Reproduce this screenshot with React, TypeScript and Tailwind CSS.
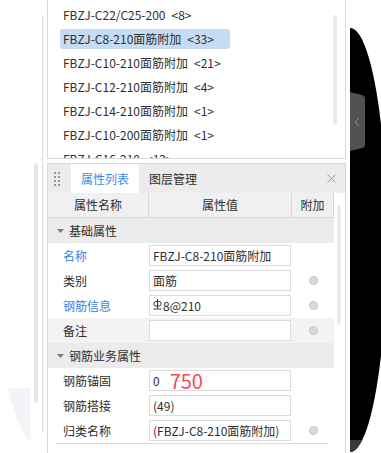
import React from "react";

const items: [string, string][] = [
  ["FBZJ-C22/C25-200", "<8>"],
  ["FBZJ-C8-210面筋附加", "<33>"],
  ["FBZJ-C10-210面筋附加", "<21>"],
  ["FBZJ-C12-210面筋附加", "<4>"],
  ["FBZJ-C14-210面筋附加", "<1>"],
  ["FBZJ-C10-200面筋附加", "<1>"],
  ["FBZJ-C16-210", "<12>"],
];

const Rebar = () => (
  <svg width="9" height="11" viewBox="0 0 9 11" className="inline-block mr-[1px] -mt-[3px] align-middle">
    <rect x="1" y="2.5" width="7" height="4.5" rx="1.8" fill="none" stroke="#333" strokeWidth="1" />
    <line x1="4.5" y1="0" x2="4.5" y2="9.5" stroke="#333" strokeWidth="1" />
    <line x1="0.5" y1="10" x2="8.5" y2="10" stroke="#333" strokeWidth="1" />
  </svg>
);

const Radio = () => (
  <div className="w-[9px] h-[9px] rounded-full bg-[#dadada] border border-[#c2c2c2]" />
);

const Tri = () => (
  <svg width="7" height="4" viewBox="0 0 7 4" className="shrink-0">
    <polygon points="0,0 7,0 3.5,4" fill="#7a7a7a" />
  </svg>
);

const Section = ({ title }: { title: string }) => (
  <div className="h-[25px] bg-[#ebebeb] flex items-center pl-[9px]">
    <Tri />
    <span className="ml-[5px]">{title}</span>
  </div>
);

const Row = ({
  label,
  blue,
  value,
  radio,
  gray,
}: {
  label: string;
  blue?: boolean;
  value: React.ReactNode;
  radio?: boolean;
  gray?: boolean;
}) => (
  <div className={`h-[25px] flex items-center ${gray ? "bg-[#f3f3f3]" : ""}`}>
    <div className={`w-[101px] pl-[15px] ${blue ? "text-[#3a7fe0]" : ""}`}>{label}</div>
    <div className="w-[143px]">
      <div className="w-[142px] h-[21px] border border-[#dcdcdc] bg-white px-[3px] flex items-center whitespace-nowrap">
        {value}
      </div>
    </div>
    <div className="w-[42px] flex justify-center">{radio ? <Radio /> : null}</div>
  </div>
);

export default function App() {
  return (
    <div className="w-[381px] h-[453px] bg-white flex overflow-hidden text-[12px] text-[#2e2e2e] font-['Noto_Sans_CJK_SC',sans-serif]">
      {/* left gutter */}
      <div className="relative w-[47px] shrink-0 flex">
        <svg width="22" height="55" viewBox="0 0 22 55" className="absolute left-[8px] top-[388px]">
          <path d="M0,0 H22 V55 Q6,32 0,0 Z" fill="#f3f4f7" />
        </svg>
        <div className="ml-[34px] mt-[163px] w-[4px] h-[240px] rounded-full bg-[#e8e8e8]" />
        <div className="ml-[4px] mt-[15px] w-px h-[418px] bg-[#dcdcdc]" />
      </div>

      {/* main */}
      <div className="w-[299px] shrink-0 flex flex-col">
        {/* list */}
        <div className="h-[159px] border-x border-b border-[#d9d9d9] flex overflow-hidden">
          <div className="flex-1 pl-[12px] pt-[5px] flex flex-col gap-[4px]">
            {items.map(([t, c], i) => (
              <div
                key={i}
                className={`h-[20px] shrink-0 w-[170px] px-[3px] rounded-[3px] leading-[20px] whitespace-nowrap ${
                  i === 1 ? "bg-[#c6dcf4]" : ""
                }`}
              >
                {t}
                <span className="ml-[6px]">{c}</span>
              </div>
            ))}
          </div>
          <div className="w-[4px] h-[110px] mt-[15px] mr-[8px] rounded-full bg-[#ebebeb]" />
        </div>

        {/* property panel */}
        <div className="mt-[4px] flex-1 border-x border-t border-[#d9d9d9] flex flex-col">
          <div className="h-[29px] bg-[#ececec] flex items-stretch">
            <div className="w-[23px] pl-[6px] flex items-center">
              <div className="grid grid-cols-2 gap-x-[2px] gap-y-[2px]">
                {Array.from({ length: 8 }).map((_, i) => (
                  <div key={i} className="w-[2px] h-[2px] bg-[#999]" />
                ))}
              </div>
            </div>
            <div className="px-[10px] bg-white text-[#3b8aeb] flex items-center">属性列表</div>
            <div className="px-[10px] flex items-center">图层管理</div>
            <div className="flex-1" />
            <div className="mr-[9px] flex items-center">
              <svg width="9" height="9" viewBox="0 0 9 9">
                <path d="M0.5,0.5 L8.5,8.5 M8.5,0.5 L0.5,8.5" stroke="#9a9a9a" strokeWidth="1" />
              </svg>
            </div>
          </div>

          <div className="flex flex-1">
            <div className="w-[286px] flex flex-col">
              <div className="h-[25px] bg-[#f0f0f0] border-b border-[#d6d6d6] grid grid-cols-[101px_143px_42px]">
                <div className="border-r border-[#d6d6d6] flex items-center justify-center">属性名称</div>
                <div className="border-r border-[#d6d6d6] flex items-center justify-center">属性值</div>
                <div className="border-r border-[#d6d6d6] flex items-center justify-center">附加</div>
              </div>
              <Section title="基础属性" />
              <Row label="名称" blue value="FBZJ-C8-210面筋附加" />
              <Row label="类别" value="面筋" radio />
              <Row
                label="钢筋信息"
                blue
                value={
                  <span className="flex items-center">
                    <Rebar />
                    <span>8@210</span>
                  </span>
                }
                radio
              />
              <Row label="备注" value="" radio gray />
              <Section title="钢筋业务属性" />
              <Row
                label="钢筋锚固"
                value={
                  <span className="flex items-center h-[19px]">
                    <span>0</span>
                    <span className="ml-[10px] text-[20px] leading-[19px] text-[#f2495c]">750</span>
                  </span>
                }
              />
              <Row label="钢筋搭接" value="(49)" />
              <Row label="归类名称" value="(FBZJ-C8-210面筋附加)" radio />
              <div className="h-px ml-[7px] w-[273px] bg-[#dcdcdc]" />
            </div>
            <div className="flex-1">
              <div className="ml-[3px] mt-[12px] w-[4px] h-[120px] rounded-full bg-[#ebebeb]" />
            </div>
          </div>
        </div>
      </div>

      {/* right black area */}
      <div className="flex-1">
        <svg width="35" height="453" viewBox="0 0 35 453">
          <defs>
            <clipPath id="ell">
              <path d="M4,28 A37,212 0 0 1 4,452 Z" />
            </clipPath>
          </defs>
          <path d="M4,28 A37,212 0 0 1 4,452 Z" fill="#000" />
          <rect x="4" y="440" width="20" height="13" fill="#3a3a3a" clipPath="url(#ell)" />
          <path d="M4,92 L16,95 Q19,96 19,99 L19,144 Q19,147 16,148 L4,151 Z" fill="#515151" />
          <polyline points="13,118 9,122 13,126" fill="none" stroke="#8f8f8f" strokeWidth="1" />
        </svg>
      </div>
    </div>
  );
}
